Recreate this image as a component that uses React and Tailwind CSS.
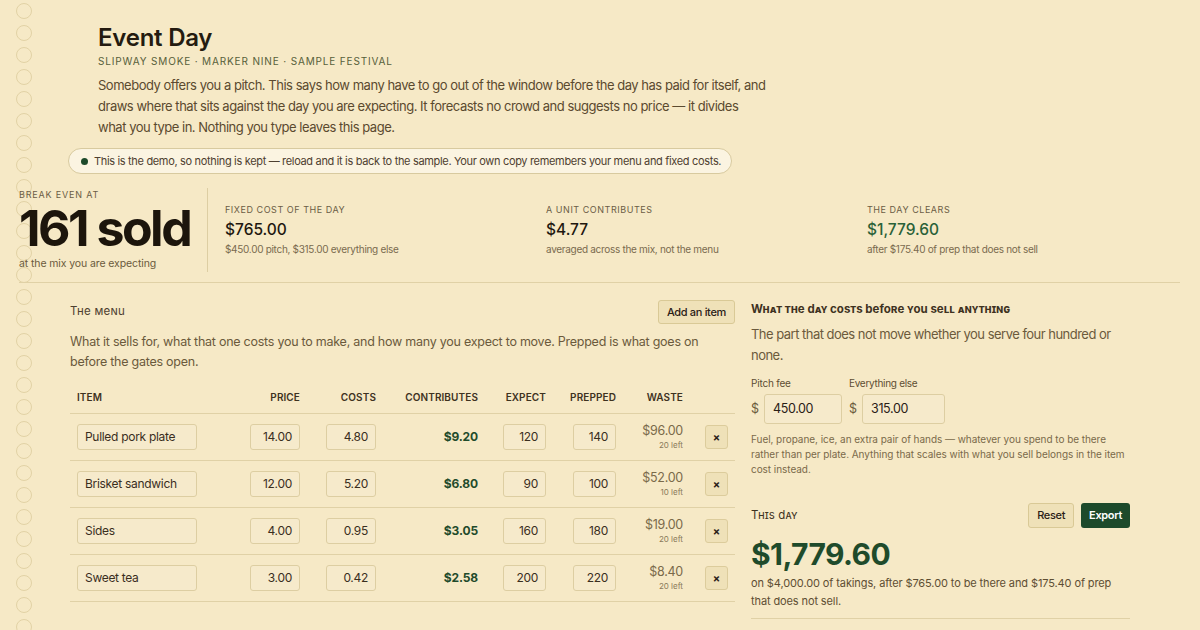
import React from 'react';

const holes = Array.from({ length: 29 });

const rows = [
  { name: 'Pulled pork plate', price: '14.00', cost: '4.80', contrib: '$9.20', expect: '120', prepped: '140', waste: '$96.00', left: '20 left' },
  { name: 'Brisket sandwich', price: '12.00', cost: '5.20', contrib: '$6.80', expect: '90', prepped: '100', waste: '$52.00', left: '10 left' },
  { name: 'Sides', price: '4.00', cost: '0.95', contrib: '$3.05', expect: '160', prepped: '180', waste: '$19.00', left: '20 left' },
  { name: 'Sweet tea', price: '3.00', cost: '0.42', contrib: '$2.58', expect: '200', prepped: '220', waste: '$8.40', left: '20 left' },
];

const cols = 'grid grid-cols-[160px_70px_76px_102px_68px_70px_67px_52px]';

function Cell({ value, width, align = 'right' }) {
  return (
    <div
      className={`h-[26px] whitespace-nowrap rounded-[3px] border border-[#ddcea2] bg-[#f6eacb] px-[7px] text-[12px] leading-[24px] tracking-[-0.025em] text-[#3a2e1e] ${align === 'right' ? 'text-right' : 'text-left'} ${width}`}
    >
      {value}
    </div>
  );
}

function Stat({ label, value, sub, green, last }) {
  return (
    <div className={`${last ? 'flex-1' : 'w-[321px] shrink-0'} pt-[15px]`}>
      <div className="text-[9px] leading-[14px] tracking-[0.06em] text-[#6b5d45] uppercase">{label}</div>
      <div className={`mt-[2px] text-[15.5px] leading-[22px] font-medium ${green ? 'text-[#2a6138]' : 'text-[#1f1810]'}`}>{value}</div>
      <div className="text-[10px] leading-[16px] tracking-[-0.03em] text-[#7a6b4f]">{sub}</div>
    </div>
  );
}

export default function App() {
  return (
    <div className="relative w-[1200px] h-[630px] overflow-hidden bg-[#f6e9c6] font-['Inter',sans-serif] text-[#2a2016]">
      {/* Notebook holes */}
      <div className="absolute left-[16px] top-[3px] flex flex-col gap-[6px]">
        {holes.map((_, i) => (
          <div key={i} className="h-4 w-4 rounded-full border border-[#e2d2a5]" />
        ))}
      </div>

      {/* Header */}
      <header className="relative pl-[98px] pt-[23px]">
        <h1 className="text-[24px] leading-[30px] font-semibold tracking-[-0.01em] text-[#241b10]">Event Day</h1>
        <div className="text-[10px] leading-[16px] tracking-[0.085em] text-[#56603a] uppercase">
          Slipway Smoke · Marker Nine · Sample Festival
        </div>
        <p className="mt-[6px] w-[720px] text-[13px] leading-[21px] tracking-[-0.037em] text-[#5b4a2f]">
          Somebody offers you a pitch. This says how many have to go out of the window before the day has paid for itself, and
          <br />
          draws where that sits against the day you are expecting. It forecasts no crowd and suggests no price — it divides
          <br />
          what you type in. Nothing you type leaves this page.
        </p>
      </header>

      <div className="relative ml-[68px] mt-[10px] inline-flex h-[26px] items-center gap-[6px] rounded-full border border-[#d8ca9f] bg-[#fbf4e1] pl-[12px] pr-[10px]">
        <span className="h-[7px] w-[7px] rounded-full bg-[#1d4a2b]" />
        <span className="whitespace-nowrap text-[11px] tracking-[-0.03em] text-[#4e4030]">
          This is the demo, so nothing is kept — reload and it is back to the sample. Your own copy remembers your menu and fixed costs.
        </span>
      </div>

      {/* Stats */}
      <div className="relative mx-[19px] mt-[14px] flex w-[1161px] border-b border-[#e0d1a6] pb-[10px]">
        <div className="w-[189px] shrink-0 border-r border-[#ddcea3]">
          <div className="text-[9px] leading-[14px] tracking-[0.09em] text-[#6b5d45] uppercase">Break even at</div>
          <div className="text-[50px] leading-[52px] font-bold tracking-[-0.05em] text-[#1c150c]">161 sold</div>
          <div className="mt-[2px] text-[10.5px] leading-[16px] tracking-[-0.01em] text-[#6b5a3c]">at the mix you are expecting</div>
        </div>
        <div className="flex flex-1 pl-[17px]">
          <Stat label="Fixed cost of the day" value="$765.00" sub="$450.00 pitch, $315.00 everything else" />
          <Stat label="A unit contributes" value="$4.77" sub="averaged across the mix, not the menu" />
          <Stat label="The day clears" value="$1,779.60" sub="after $175.40 of prep that does not sell" green last />
        </div>
      </div>

      {/* Main */}
      <div className="relative flex gap-[16px] pl-[70px]">
        {/* Menu */}
        <section className="w-[665px] shrink-0 pt-[17px]">
          <div className="flex h-[24px] items-center justify-between">
            <h2 className="text-[11.5px] tracking-[0.02em] text-[#4e4030] [font-variant-caps:small-caps]">The menu</h2>
            <button className="h-[24px] rounded-[3px] border border-[#d9c996] bg-[#efe1b8] px-[8px] text-[11px] font-medium tracking-[-0.03em] text-[#2a2016]">
              Add an item
            </button>
          </div>
          <p className="mt-[8px] text-[12.5px] leading-[20px] tracking-[-0.02em] text-[#6b5a3c]">
            What it sells for, what that one costs you to make, and how many you expect to move. Prepped is what goes on before
            the gates open.
          </p>

          <div className="mt-[9px]">
            <div className={`${cols} h-[33px] items-center border-b border-[#e0d1a6] text-[10px] font-semibold tracking-[0.01em] text-[#3e321f] uppercase`}>
              <div className="pl-[7px]">Item</div>
              <div className="text-right">Price</div>
              <div className="text-right">Costs</div>
              <div className="text-right">Contributes</div>
              <div className="text-right">Expect</div>
              <div className="text-right">Prepped</div>
              <div className="text-right">Waste</div>
              <div />
            </div>
            {rows.map((r) => (
              <div key={r.name} className={`${cols} h-[47px] items-center border-b border-[#e0d1a6]`}>
                <div className="pl-[7px]">
                  <Cell value={r.name} width="w-[120px]" align="left" />
                </div>
                <div className="flex justify-end">
                  <Cell value={r.price} width="w-[50px]" />
                </div>
                <div className="flex justify-end">
                  <Cell value={r.cost} width="w-[50px]" />
                </div>
                <div className="text-right text-[12px] font-bold tracking-[-0.01em] text-[#1f4b2b]">{r.contrib}</div>
                <div className="flex justify-end">
                  <Cell value={r.expect} width="w-[43px]" />
                </div>
                <div className="flex justify-end">
                  <Cell value={r.prepped} width="w-[43px]" />
                </div>
                <div className="flex flex-col items-end">
                  <span className="text-[12.5px] leading-[16px] tracking-[-0.02em] text-[#7a6a4a]">{r.waste}</span>
                  <span className="text-[8px] leading-[12px] text-[#8a7a5a]">{r.left}</span>
                </div>
                <div className="pl-[22px]">
                  <button className="flex h-[24px] w-[23px] items-center justify-center rounded-[3px] border border-[#dccc9c] bg-[#efe1b8] text-[11px] font-bold text-[#2a2016]">
                    ×
                  </button>
                </div>
              </div>
            ))}
          </div>
        </section>

        {/* Fixed costs */}
        <section className="w-[379px] shrink-0 pt-[17px]">
          <div className="flex h-[20px] items-center">
            <h2 className="whitespace-nowrap text-[11.5px] font-bold text-[#3e321f] [font-variant-caps:small-caps]">
              What the day costs before you sell anything
            </h2>
          </div>
          <p className="mt-[4px] text-[13px] leading-[21px] tracking-[-0.04em] text-[#6b5a3c]">
            The part that does not move whether you serve four hundred or none.
          </p>
          <div className="mt-[10px] flex gap-[7px]">
            <div>
              <div className="text-[10px] leading-[14px] tracking-[-0.02em] text-[#5e4e33]">Pitch fee</div>
              <div className="mt-[4px] flex items-center gap-[5px]">
                <span className="text-[12.5px] text-[#6b5a3c]">$</span>
                <div className="h-[30px] w-[78px] rounded-[3px] border border-[#ddcea2] bg-[#f6eacb] px-[8px] text-[12.5px] leading-[28px] tracking-[-0.03em] text-[#2a2016]">450.00</div>
              </div>
            </div>
            <div>
              <div className="text-[10px] leading-[14px] tracking-[-0.03em] text-[#5e4e33]">Everything else</div>
              <div className="mt-[4px] flex items-center gap-[5px]">
                <span className="text-[12.5px] text-[#6b5a3c]">$</span>
                <div className="h-[30px] w-[83px] rounded-[3px] border border-[#ddcea2] bg-[#f6eacb] px-[8px] text-[12.5px] leading-[28px] tracking-[-0.03em] text-[#2a2016]">315.00</div>
              </div>
            </div>
          </div>
          <p className="mt-[8px] w-[375px] text-[10px] leading-[15px] tracking-[-0.005em] text-[#7a6a4a]">
            Fuel, propane, ice, an extra pair of hands — whatever you spend to be there rather than per plate. Anything that
            scales with what you sell belongs in the item cost instead.
          </p>

          <div className="mt-[26px] flex h-[25px] items-center justify-between">
            <h2 className="text-[11.5px] tracking-[0.01em] text-[#3e321f] [font-variant-caps:small-caps]">This day</h2>
            <div className="flex gap-[7px]">
              <button className="h-[25px] rounded-[3px] border border-[#d9c996] bg-[#efe1b8] px-[8px] text-[11px] font-medium tracking-[-0.03em] text-[#2a2016]">
                Reset
              </button>
              <button className="h-[25px] rounded-[3px] bg-[#1d4a2b] px-[8px] text-[11px] font-semibold tracking-[-0.03em] text-white">Export</button>
            </div>
          </div>
          <div className="mt-[8px] text-[30px] leading-[36px] font-bold tracking-[-0.02em] text-[#1f4b2b]">$1,779.60</div>
          <p className="mt-[2px] border-b border-[#e0d1a6] pb-[8px] text-[11px] leading-[18px] tracking-[-0.01em] text-[#5e4e33]">
            on $4,000.00 of takings, after $765.00 to be there and $175.40 of prep that does not sell.
          </p>
        </section>
      </div>
    </div>
  );
}
